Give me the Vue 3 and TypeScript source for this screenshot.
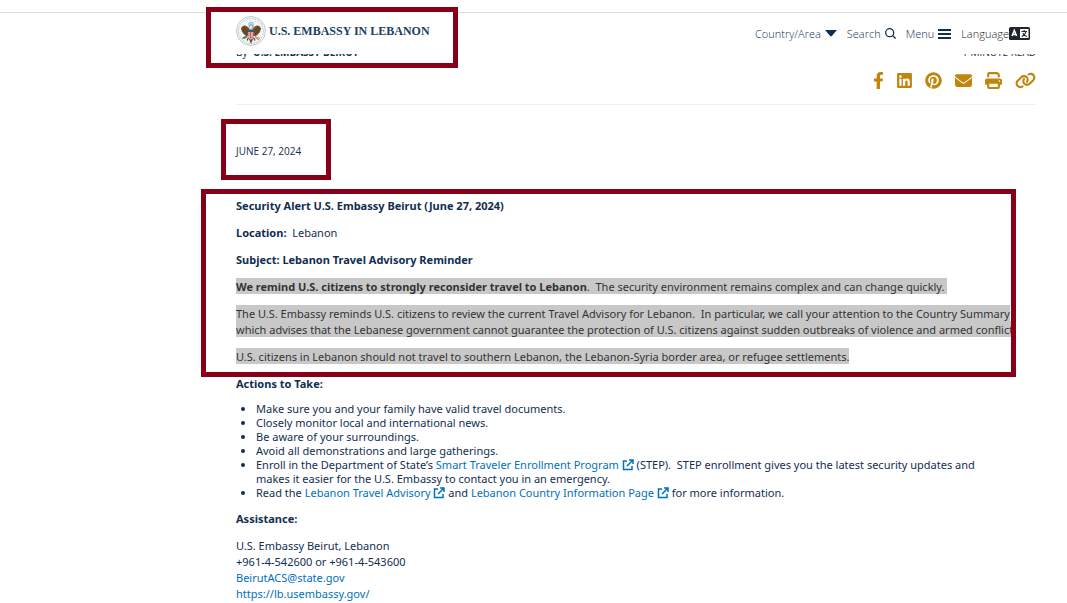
<script setup lang="ts">
interface ShareLink {
  label: string
  width: number
  viewBox: string
  path: string
}

const shareLinks: ShareLink[] = [
  {
    label: 'Share on Facebook',
    width: 11,
    viewBox: '0 0 320 512',
    path: 'M279.14 288l14.22-92.66h-88.91v-60.13c0-25.35 12.42-50.06 52.24-50.06h40.42V6.26S260.43 0 225.36 0c-73.22 0-121.08 44.38-121.08 124.72v70.62H22.89V288h81.39v224h100.17V288z',
  },
  {
    label: 'Share on LinkedIn',
    width: 15,
    viewBox: '0 0 448 512',
    path: 'M416 32H31.9C14.3 32 0 46.5 0 64.3v383.4C0 465.5 14.3 480 31.9 480H416c17.6 0 32-14.5 32-32.3V64.3c0-17.8-14.4-32.3-32-32.3zM135.4 416H69V202.2h66.5V416zm-33.2-243c-21.3 0-38.5-17.3-38.5-38.5S80.9 96 102.2 96c21.2 0 38.5 17.3 38.5 38.5 0 21.3-17.2 38.5-38.5 38.5zm282.1 243h-66.4V312c0-24.8-.5-56.7-34.5-56.7-34.6 0-39.9 27-39.9 54.9V416h-66.4V202.2h63.7v29.2h.9c8.9-16.8 30.6-34.5 62.9-34.5 67.2 0 79.7 44.3 79.7 101.9V416z',
  },
  {
    label: 'Share on Pinterest',
    width: 17,
    viewBox: '0 0 496 512',
    path: 'M496 256c0 137-111 248-248 248-25.6 0-50.2-3.9-73.4-11.1 10.1-16.5 25.2-43.5 30.8-65 3-11.6 15.4-59 15.4-59 8.1 15.4 31.7 28.5 56.8 28.5 74.8 0 128.7-68.8 128.7-154.3 0-81.9-66.9-143.2-152.9-143.2-107 0-163.9 71.8-163.9 150.1 0 36.4 19.4 81.7 50.3 96.1 4.7 2.2 7.2 1.2 8.3-3.3.8-3.4 5-20.3 6.9-28.1.6-2.5.3-4.7-1.7-7.1-10.1-12.5-18.3-35.3-18.3-56.6 0-54.7 41.4-107.6 112-107.6 60.9 0 103.6 41.5 103.6 100.9 0 67.1-33.9 113.6-78 113.6-24.3 0-42.6-20.1-36.7-44.8 7-29.5 20.5-61.3 20.5-82.6 0-19-10.2-34.9-31.4-34.9-24.9 0-44.9 25.7-44.9 60.2 0 22 7.4 36.8 7.4 36.8s-24.5 103.8-29 123.2c-5 21.4-3 51.6-.9 71.2C65.4 450.9 0 361.1 0 256 0 119 111 8 248 8s248 111 248 248z',
  },
  {
    label: 'Share by email',
    width: 17,
    viewBox: '0 0 512 512',
    path: 'M48 64C21.5 64 0 85.5 0 112c0 15.1 7.1 29.3 19.2 38.4L236.8 313.6c11.4 8.5 27 8.5 38.4 0L492.8 150.4c12.1-9.1 19.2-23.3 19.2-38.4c0-26.5-21.5-48-48-48H48zM0 176V384c0 35.3 28.7 64 64 64H448c35.3 0 64-28.7 64-64V176L294.4 339.2c-22.8 17.1-54 17.1-76.8 0L0 176z',
  },
  {
    label: 'Print this page',
    width: 17,
    viewBox: '0 0 512 512',
    path: 'M128 0C92.7 0 64 28.7 64 64v96h64V64H354.7L384 93.3V160h64V93.3c0-17-6.7-33.3-18.7-45.3L400 18.7C388 6.7 371.7 0 354.7 0H128zM384 352v32 64H128V384 368 352H384zm64 32h32c17.7 0 32-14.3 32-32V256c0-35.3-28.7-64-64-64H64c-35.3 0-64 28.7-64 64v96c0 17.7 14.3 32 32 32H64v64c0 35.3 28.7 64 64 64H384c35.3 0 64-28.7 64-64V384zM432 248a24 24 0 1 1 0 48 24 24 0 1 1 0-48z',
  },
  {
    label: 'Copy link',
    width: 21,
    viewBox: '0 0 640 512',
    path: 'M579.8 267.7c56.5-56.5 56.5-148 0-204.5c-50-50-128.8-56.5-186.3-15.4l-1.6 1.1c-14.4 10.3-17.7 30.3-7.4 44.6s30.3 17.7 44.6 7.4l1.6-1.1c32.1-22.9 76-19.3 103.8 8.6c31.5 31.5 31.5 82.5 0 114L422.3 334.8c-31.5 31.5-82.5 31.5-114 0c-27.9-27.9-31.5-71.8-8.6-103.8l1.1-1.6c10.3-14.4 6.9-34.4-7.4-44.6s-34.4-6.9-44.6 7.4l-1.1 1.6C206.5 251.2 213 330 263 380c56.5 56.5 148 56.5 204.5 0L579.8 267.7zM60.2 244.3c-56.5 56.5-56.5 148 0 204.5c50 50 128.8 56.5 186.3 15.4l1.6-1.1c14.4-10.3 17.7-30.3 7.4-44.6s-30.3-17.7-44.6-7.4l-1.6 1.1c-32.1 22.9-76 19.3-103.8-8.6C74 372 74 321 105.5 289.5L217.7 177.2c31.5-31.5 82.5-31.5 114 0c27.9 27.9 31.5 71.8 8.6 103.9l-1.1 1.6c-10.3 14.4-6.9 34.4 7.4 44.6s34.4 6.9 44.6-7.4l1.1-1.6C433.5 260.8 427 182 377 132c-56.5-56.5-148-56.5-204.5 0L60.2 244.3z',
  },
]

const actions: string[] = [
  'Make sure you and your family have valid travel documents.',
  'Closely monitor local and international news.',
  'Be aware of your surroundings.',
  'Avoid all demonstrations and large gatherings.',
]
</script>

<template>
  <div class="page">
    <header class="site-header">
      <a class="brand" href="#">
        <svg class="seal" viewBox="0 0 60 60" aria-hidden="true">
          <circle cx="30" cy="30" r="29" fill="#fdfdfd" stroke="#a3afba" stroke-width="1.4" />
          <circle cx="30" cy="30" r="25" fill="none" stroke="#b3bcc6" stroke-width="3" stroke-dasharray="1.6 1.8" />
          <circle cx="30" cy="30" r="21" fill="#fff" stroke="#d3d9de" stroke-width="1" />
          <circle cx="30" cy="17" r="6" fill="#a9d3ee" />
          <path d="M27 26C20 16 13 18 10 25c1 7 5 13 12 16l7-6zM33 26c7-10 14-8 17-1-1 7-5 13-12 16l-7-6z" fill="#71502f" />
          <path d="M12 25l10 11M15 22l10 11M48 25L38 36M45 22L35 33" stroke="#3f2c1d" stroke-width="1.4" />
          <path d="M26 24c0-6 7-8 9-3l-3 1v5h-6z" fill="#f3f0e8" stroke="#61503b" stroke-width="1" />
          <path d="M24 28h12v8c0 5-3 7-6 9-3-2-6-4-6-9z" fill="#fff" stroke="#8c5360" />
          <path d="M24 28h12v4H24z" fill="#33598b" />
          <path d="M26 32v9M29 32v12M32 32v12M35 32v8" stroke="#b72a37" stroke-width="1.6" />
          <path d="M25 43l-3 6M35 43l3 6M27 45l3 7 3-7" stroke="#715334" stroke-width="3" fill="none" />
          <path d="M22 40c-6-1-8 2-10 5 5 2 8 0 11-3" fill="#4d8b4e" />
          <path d="M38 41l10 4M38 43l8 5" stroke="#b08a4a" stroke-width="2" />
        </svg>
        <span class="brand-name">U.S. EMBASSY IN LEBANON</span>
        <span class="mark mark-brand"></span>
      </a>
      <nav class="site-nav" aria-label="Main">
        <button type="button">
          Country/Area
          <svg width="12" height="7" viewBox="0 0 12 7" aria-hidden="true"><path d="M0 0h12L6.8 6q-.8.9-1.6 0z" fill="currentColor" /></svg>
        </button>
        <button type="button">
          Search
          <svg width="11" height="11" viewBox="0 0 11 11" aria-hidden="true"><path d="M7.8 7.8l2.8 2.8M4.7.7a4 4 0 1 1 0 8 4 4 0 0 1 0-8z" fill="none" stroke="currentColor" stroke-width="1.3" /></svg>
        </button>
        <button type="button">
          Menu
          <svg width="13" height="10" viewBox="0 0 13 10" aria-hidden="true"><path d="M0 0h13v2H0zM0 4h13v2H0zM0 8h13v2H0z" fill="currentColor" /></svg>
        </button>
        <button type="button" class="language">
          Language
          <svg width="21" height="13" viewBox="0 0 21 13" aria-hidden="true">
            <rect width="21" height="13" rx="1.5" fill="#212529" />
            <rect x="11" y="2" width="8.5" height="9" fill="#fff" />
            <path d="M3 9l2.3-5.500L7.600 9M3.800 7.500h3" fill="none" stroke="#fff" stroke-width="1.500" />
            <path d="M12.500 4.500h5.500M15.200 3v1.500M17 4.500C16.500 7 15 8.600 12.700 9.500M13.700 6C14.700 8 16 9 17.800 9.500" fill="none" stroke="#212529" stroke-width="1.100" />
          </svg>
        </button>
      </nav>
    </header>

    <main class="article">
      <div class="byline">
        <span class="author">By <strong>U.S. EMBASSY BEIRUT</strong></span>
        <span>1 MINUTE READ</span>
      </div>
      <div class="share">
        <a v-for="link in shareLinks" :key="link.label" href="#" :aria-label="link.label">
          <svg :width="link.width" height="17" :viewBox="link.viewBox" aria-hidden="true"><path :d="link.path" fill="currentColor" /></svg>
        </a>
      </div>

      <div class="date-row">
        <time datetime="2024-06-27">JUNE 27, 2024</time>
        <span class="mark mark-date"></span>
      </div>

      <section class="alert">
        <p><strong>Security Alert U.S. Embassy Beirut (June 27, 2024)</strong></p>
        <p><strong>Location:</strong>&nbsp; Lebanon</p>
        <p><strong>Subject: Lebanon Travel Advisory Reminder</strong></p>
        <p><span class="selected"><strong>We remind U.S. citizens to strongly reconsider travel to Lebanon</strong>.&nbsp; The security environment remains complex and can change quickly.&nbsp;</span></p>
        <p><span class="selected">The U.S. Embassy reminds U.S. citizens to review the current Travel Advisory for Lebanon.&nbsp; In particular, we call your attention to the Country Summary which advises that the Lebanese government cannot guarantee the protection of U.S. citizens against sudden outbreaks of violence and armed conflict.</span></p>
        <p><span class="selected">U.S. citizens in Lebanon should not travel to southern Lebanon, the Lebanon-Syria border area, or refugee settlements.</span></p>
        <span class="mark mark-alert"></span>
      </section>

      <p><strong>Actions to Take:</strong></p>
      <ul>
        <li v-for="action in actions" :key="action">{{ action }}</li>
        <li>
          Enroll in the Department of State’s
          <a href="#">Smart Traveler Enrollment Program <svg class="external" viewBox="0 0 12 12" aria-hidden="true"><path d="M5 2H1.500v8.500H10V7M7 1h4v4M11 1L5 7" /></svg></a>
          (STEP).&nbsp; STEP enrollment gives you the latest security updates and makes it easier for the U.S. Embassy to contact you in an emergency.
        </li>
        <li>
          Read the
          <a href="#">Lebanon Travel Advisory <svg class="external" viewBox="0 0 12 12" aria-hidden="true"><path d="M5 2H1.500v8.500H10V7M7 1h4v4M11 1L5 7" /></svg></a>
          and
          <a href="#">Lebanon Country Information Page <svg class="external" viewBox="0 0 12 12" aria-hidden="true"><path d="M5 2H1.500v8.500H10V7M7 1h4v4M11 1L5 7" /></svg></a>
          for more information.
        </li>
      </ul>
      <p><strong>Assistance:</strong></p>
      <address>
        U.S. Embassy Beirut, Lebanon<br />
        +961-4-542600 or +961-4-543600<br />
        <a href="#">BeirutACS@state.gov</a><br />
        <a href="#">https://lb.usembassy.gov/</a>
      </address>
    </main>
  </div>
</template>

<style>
body {
  margin: 0;
  background: #fff;
}
</style>

<style scoped>
.page {
  height: 100vh;
  box-sizing: border-box;
  padding-top: 12px;
  overflow: hidden;
  font: 11px/16px "Noto Sans", "Open Sans", sans-serif;
  color: #112e51;
}

a {
  color: #0071bc;
  text-decoration: none;
}

.site-header {
  position: relative;
  z-index: 1;
  display: flex;
  justify-content: space-between;
  height: 41px;
  padding: 0 37px 0 211px;
  border-top: 1px solid #ddd;
  background: #fff;
}

.brand {
  position: relative;
  display: flex;
  align-items: center;
  gap: 3px;
  width: 217px;
  margin-top: -1px;
  padding: 0 0 4px 25px;
  background: #fff;
  color: #1c3f5e;
}

.seal {
  width: 30px;
  height: 32px;
}

.brand-name {
  font: bold 12px/16px "Liberation Serif", serif;
  white-space: nowrap;
}

.mark {
  position: absolute;
  border: 5px solid #870018;
  pointer-events: none;
}

.mark-brand {
  inset: -5px -5px -14px;
}

.site-nav {
  display: flex;
  align-items: center;
  gap: 10px;
}

.site-nav button {
  display: flex;
  align-items: center;
  gap: 4px;
  padding: 0;
  border: 0;
  background: none;
  color: inherit;
  font: 300 11px/16px "Open Sans", "Noto Sans", sans-serif;
}

.site-nav .language {
  gap: 0;
  color: #212529;
}

.article {
  margin-top: -10px;
  padding: 0 31px 0 236px;
}

.byline {
  display: flex;
  justify-content: space-between;
  font-family: "Open Sans", "Noto Sans", sans-serif;
  font-size: 10px;
}

.author strong {
  margin-left: 3px;
}

.share {
  display: flex;
  justify-content: flex-end;
  gap: 13px;
  padding: 12px 0 15px;
  border-bottom: 1px solid #eee;
}

.share a {
  display: flex;
  color: #c2850c;
}

.date-row {
  position: relative;
  padding: 38px 0 39px;
  font-family: "Open Sans", "Noto Sans", sans-serif;
  font-size: 10px;
}

.mark-date {
  inset: 14px auto 18px -15px;
  width: 100px;
}

.alert {
  position: relative;
}

.mark-alert {
  inset: -9px 20px -12px -35px;
}

p {
  margin: 0 0 11px;
}

.selected {
  padding: 1px 0 0;
  background: #c8c8c8;
  color: #333;
}

ul {
  margin: -1px 0 11px;
  padding: 0 30px 0 20px;
  line-height: 14px;
}

.external {
  width: 12px;
  height: 12px;
  vertical-align: -2px;
  fill: none;
  stroke: currentColor;
  stroke-width: 1.5;
}

address {
  font-style: normal;
}
</style>
